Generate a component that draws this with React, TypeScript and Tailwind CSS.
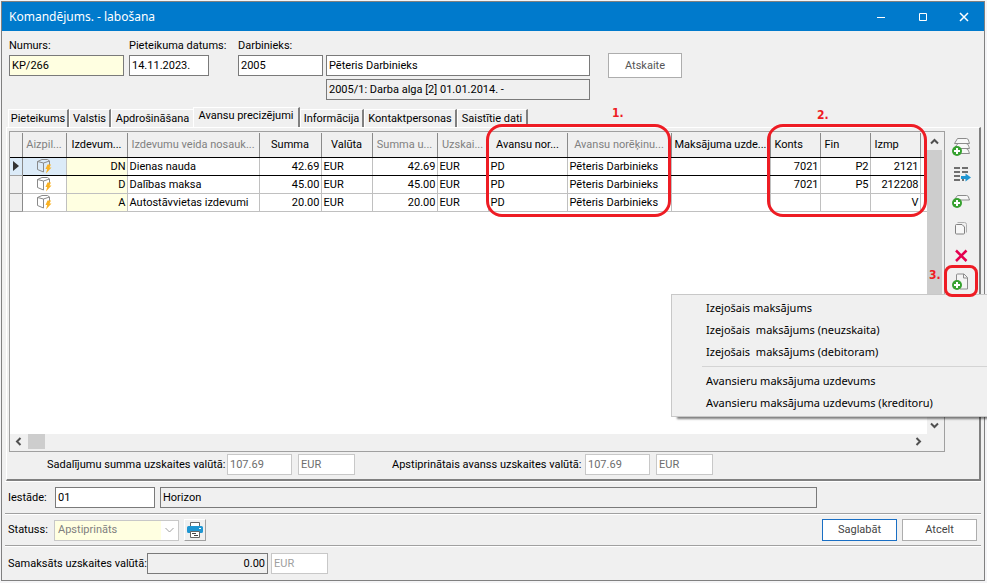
import { Fragment, type ReactNode } from "react";
import clsx from "clsx";

type Column = {
  title: string;
  width: string;
  muted?: boolean;
  left?: boolean;
};

type Row = {
  code: string;
  name: string;
  sum: string;
  konts: string;
  fin: string;
  izmp: string;
};

const columns: Column[] = [
  { title: "", width: "w-3" },
  { title: "Aizpil...", width: "w-[44px]", muted: true },
  { title: "Izdevum...", width: "w-[61px]" },
  { title: "Izdevumu veida nosauk...", width: "w-[132px]", muted: true },
  { title: "Summa", width: "w-[62px]" },
  { title: "Valūta", width: "w-[51px]" },
  { title: "Summa u...", width: "w-[65px]", muted: true },
  { title: "Uzskai...", width: "w-[51px]", muted: true },
  { title: "Avansu nor...", width: "w-[79px]" },
  { title: "Avansu norēķinu...", width: "w-[104px]", muted: true },
  { title: "Maksājuma uzde...", width: "w-[99px]" },
  { title: "Konts", width: "w-[50px]", left: true },
  { title: "Fin", width: "w-[50px]", left: true },
  { title: "Izmp", width: "w-[50px]", left: true },
];

const rows: Row[] = [
  { code: "DN", name: "Dienas nauda", sum: "42.69", konts: "7021", fin: "P2", izmp: "2121" },
  { code: "D", name: "Dalības maksa", sum: "45.00", konts: "7021", fin: "P5", izmp: "212208" },
  { code: "A", name: "Autostāvvietas izdevumi", sum: "20.00", konts: "", fin: "", izmp: "V" },
];

const tabs = [
  { label: "Pieteikums", width: "w-[61px]" },
  { label: "Valstis", width: "w-[42px]" },
  { label: "Apdrošināšana", width: "w-[82px]" },
  { label: "Avansu precizējumi", width: "w-[107px]" },
  { label: "Informācija", width: "w-[64px]" },
  { label: "Kontaktpersonas", width: "w-[93px]" },
  { label: "Saistītie dati", width: "w-[71px]" },
];

const menuGroups = [
  [
    "Izejošais maksājums",
    "Izejošais  maksājums (neuzskaita)",
    "Izejošais  maksājums (debitoram)",
  ],
  ["Avansieru maksājuma uzdevums", "Avansieru maksājuma uzdevums (kreditoru)"],
];

function TextBox({
  id,
  value,
  label,
  className,
}: {
  id: string;
  value: string;
  label?: string;
  className: string;
}) {
  return (
    <input
      id={id}
      aria-label={label}
      defaultValue={value}
      className={clsx("h-[21px] border px-[2px] outline-none", className)}
    />
  );
}

function BoxIcon() {
  return (
    <svg className="mx-auto block" width="16" height="16" viewBox="0 0 16 16" fill="none">
      <path
        d="M1.5 3.5 6 1.5h5.5l2 1.5v4M1.5 3.5v8l6 2.5M1.5 3.5l6 1.5 6-2M7.5 5v9"
        stroke="#8a8a8a"
      />
      <path d="M11.500 6.500h3.500L13.500 9.500h2L10 15.500l1.200-4.500H9.500z" fill="#f9b122" />
    </svg>
  );
}

function PlusBadge({ x, y }: { x: number; y: number }) {
  return (
    <g stroke="none">
      <circle cx={x} cy={y} r="5" fill="#36a12f" />
      <path d={`M${x - 3} ${y}h6M${x} ${y - 3}v6`} stroke="#fff" strokeWidth="2" />
    </g>
  );
}

function AddRowsIcon() {
  return (
    <svg width="20" height="20" viewBox="0 0 20 20" fill="#f7f7f7" stroke="#8c8c8c">
      <path d="M6.500 15.500 9 11.500h6c2 0 2.500 2.500 3.500 5H8z" />
      <path d="M4.500 9.500 7 6.500h8c2 0 2.500 2 3.500 5H8z" />
      <path d="M3.500 6.500 6.500 1.500h9c2 0 2 2.500 3 5z" />
      <PlusBadge x={6} y={14} />
    </svg>
  );
}

function MoveRowsIcon() {
  return (
    <svg width="20" height="20" viewBox="0 0 20 20" fill="none">
      <path
        d="M3 4h6m2 0h6M3 8h6m2 0h6M3 12h6M3 16h6m2 0h2"
        stroke="#444"
        strokeWidth="1.500"
      />
      <path d="M10 12h4.500v-2.500l5.500 4-5.500 4V15H10z" fill="#1f96d2" />
    </svg>
  );
}

function AddRowIcon() {
  return (
    <svg width="20" height="20" viewBox="0 0 20 20" fill="none">
      <path
        d="M3.500 8.500 6.500 4.500h9c2 0 2 2 3 4.500H9"
        stroke="#8c8c8c"
        fill="#f7f7f7"
      />
      <PlusBadge x={6} y={12} />
    </svg>
  );
}

function CopyIcon() {
  return (
    <svg width="20" height="20" viewBox="0 0 20 20" fill="none">
      <path d="M6.500 4.500h7a2 2 0 0 1 2 2v8" stroke="#b0b0b0" />
      <path
        d="M5.500 6.500H11L13.500 9v6a1 1 0 0 1-1 1h-7a1 1 0 0 1-1-1V7.500a1 1 0 0 1 1-1z"
        stroke="#808080"
        fill="#f7f7f7"
      />
    </svg>
  );
}

function DeleteIcon() {
  return (
    <svg width="20" height="20" viewBox="0 0 20 20" fill="none">
      <path d="M5 5.500l10.500 10.500M15.500 5.500 5 16" stroke="#e5004f" strokeWidth="2.500" />
    </svg>
  );
}

function NewDocumentIcon() {
  return (
    <svg width="20" height="20" viewBox="0 0 20 20" fill="none">
      <path d="M5.500 9V3a1 1 0 0 1 1-1H13l3.500 3.500v11.500H9" stroke="#8c8c8c" fill="#f4f4f4" />
      <path d="M12.500 2v4h4" stroke="#8c8c8c" />
      <PlusBadge x={6} y={13} />
    </svg>
  );
}

function PrinterIcon() {
  return (
    <svg width="16" height="16" viewBox="0 0 16 16" fill="none">
      <path d="M3.500 4V.5h9V4" stroke="#666" fill="#fff" />
      <path d="M1.500 4h13A1.500 1.500 0 0 1 16 5.500v4a1.500 1.500 0 0 1-1.500 1.500h-13A1.500 1.500 0 0 1 0 9.500v-4A1.500 1.500 0 0 1 1.500 4z" fill="#1f96d2" />
      <path d="M12 6.500h2" stroke="#fff" />
      <path d="M3.500 9.500h9v6h-9z" stroke="#666" fill="#fff" />
      <path d="M5 11.500h4M7 13.500h4" stroke="#444" />
    </svg>
  );
}

function Chevron({ d }: { d: string }) {
  return (
    <svg width="9" height="9" viewBox="0 0 9 9" fill="none">
      <path d={d} stroke="#505050" strokeWidth="2" />
    </svg>
  );
}

function ToolButton({ label, children }: { label: string; children: ReactNode }) {
  return (
    <button type="button" aria-label={label} className="flex size-5 items-center justify-center">
      {children}
    </button>
  );
}

function TitleBar() {
  return (
    <header className="flex h-[29px] items-center bg-[#007acc] text-white">
      <h1 className="flex-1 pl-[7px] font-['Noto_Sans',sans-serif] text-[12px]">
        Komandējums. - labošana
      </h1>
      <button type="button" aria-label="Minimizēt" className="flex w-[42px] justify-center">
        <svg width="10" height="10" viewBox="0 0 10 10">
          <path d="M1 5.500h8" stroke="#fff" />
        </svg>
      </button>
      <button type="button" aria-label="Maksimizēt" className="flex w-[42px] justify-center">
        <svg width="10" height="10" viewBox="0 0 10 10">
          <path d="M1.500 1.500h7v7h-7z" stroke="#fff" fill="none" />
        </svg>
      </button>
      <button type="button" aria-label="Aizvērt" className="flex w-10 justify-center">
        <svg width="10" height="10" viewBox="0 0 10 10">
          <path d="M1 1l8 8M9 1 1 9" stroke="#fff" strokeWidth="1.500" />
        </svg>
      </button>
    </header>
  );
}

function HeaderForm() {
  return (
    <section className="flex items-start px-[7px] pt-2">
      <div className="mr-[5px] flex w-[115px] flex-col">
        <label htmlFor="numurs" className="h-4 leading-[14px]">
          Numurs:
        </label>
        <TextBox id="numurs" value="KP/266" className="border-[#7a7a7a] bg-[#ffffe1]" />
      </div>
      <div className="mr-[29px] flex w-20 flex-col">
        <label htmlFor="datums" className="h-4 leading-[14px] whitespace-nowrap">
          Pieteikuma datums:
        </label>
        <TextBox id="datums" value="14.11.2023." className="border-[#7a7a7a] bg-white" />
      </div>
      <div className="mr-[3px] flex w-[85px] flex-col">
        <label htmlFor="darbinieks" className="h-4 leading-[14px]">
          Darbinieks:
        </label>
        <TextBox id="darbinieks" value="2005" className="border-[#7a7a7a] bg-white" />
      </div>
      <div className="flex w-[264px] flex-col gap-[3px] pt-4">
        <TextBox
          id="vards"
          label="Darbinieka vārds"
          value="Pēteris Darbinieks"
          className="border-[#7a7a7a] bg-white"
        />
        <TextBox
          id="ligums"
          label="Darba līgums"
          value="2005/1: Darba alga [2] 01.01.2014. -"
          className="border-[#7a7a7a] bg-[#f0f0f0]"
        />
      </div>
      <div className="pt-[14px] pl-[18px]">
        <button
          type="button"
          className="h-[25px] w-[74px] border border-[#adadad] bg-white text-[#555]"
        >
          Atskaite
        </button>
      </div>
    </section>
  );
}

function TabStrip() {
  return (
    <div role="tablist" className="flex h-5 items-end pt-px pl-[6px]">
      {tabs.map((tab) => {
        const active = tab.label === "Avansu precizējumi";
        return (
          <button
            key={tab.label}
            type="button"
            role="tab"
            aria-selected={active}
            className={clsx(
              "border-t border-l border-t-white border-l-white whitespace-nowrap",
              tab.width,
              active ? "h-5 border-r-2 border-r-[#808080] pb-1" : "h-[18px]",
              !active && tab.label !== "Apdrošināšana" && "border-r-2 border-r-[#808080]",
            )}
          >
            {tab.label}
          </button>
        );
      })}
    </div>
  );
}

function ExpenseTable() {
  return (
    <table className="w-full table-fixed border-collapse bg-white">
      <colgroup>
        {columns.map((col, i) => (
          <col key={i} className={col.width} />
        ))}
        <col />
      </colgroup>
      <thead>
        <tr className="h-6 bg-[#f0f0f0]">
          {columns.map((col, i) => (
            <th
              key={i}
              className={clsx(
                "overflow-hidden border-r border-b border-r-[#8a8a8a] border-b-black p-0 pt-px font-normal whitespace-nowrap",
                col.muted ? "text-[#808080]" : "text-black",
                col.left && "pl-1 text-left",
              )}
            >
              {col.title}
            </th>
          ))}
          <th className="border-b border-black p-0" />
        </tr>
      </thead>
      <tbody>
        {rows.map((row, i) => {
          const current = i === 0;
          const cells = [
            row.name,
            row.sum,
            "EUR",
            row.sum,
            "EUR",
            "PD",
            "Pēteris Darbinieks",
            "",
            row.konts,
            row.fin,
            row.izmp,
          ];
          const line = current ? "border-b-black" : "border-b-[#c0c0c0]";
          return (
            <tr key={row.code} className="h-[18px]">
              <td
                className={clsx(
                  "border-r border-b border-r-[#8a8a8a] border-b-[#a0a0a0] p-0",
                  current ? "bg-[#dcebf8]" : "bg-[#f0f0f0]",
                )}
              >
                {current && (
                  <svg className="ml-[3px] block" width="6" height="10" viewBox="0 0 6 10">
                    <path d="M0 0l6 5-6 5z" fill="#333" />
                  </svg>
                )}
              </td>
              <td
                className={clsx(
                  "border-r border-b border-r-[#c0c0c0] p-0",
                  line,
                  current && "bg-[#dcebf8]",
                )}
              >
                <BoxIcon />
              </td>
              <td
                className={clsx(
                  "border-r border-b border-r-[#c0c0c0] bg-[#ffffe1] p-0 pt-px pr-px text-right",
                  line,
                )}
              >
                {row.code}
              </td>
              {cells.map((text, c) => (
                <td
                  key={c}
                  className={clsx(
                    "overflow-hidden border-r border-b border-r-[#c0c0c0] pt-px pr-px pb-0 pl-[2px] whitespace-nowrap",
                    line,
                    (c === 1 || c === 3 || c > 7) && "text-right",
                  )}
                >
                  {text}
                </td>
              ))}
              <td className={clsx("border-b p-0", line)} />
            </tr>
          );
        })}
      </tbody>
    </table>
  );
}

function Grid() {
  return (
    <div className="flex min-w-0 flex-1 flex-col border border-[#a0a0a0] bg-[#f0f0f0]">
      <div className="flex flex-1 pt-px">
        <div className="min-w-0 flex-1 bg-white">
          <ExpenseTable />
        </div>
        <div className="mr-[2px] flex w-[15px] flex-col items-center">
          <div className="flex h-[17px] items-center">
            <Chevron d="M1 6.500 4.500 3 8 6.500" />
          </div>
          <div className="w-full flex-1 bg-[#cdcdcd]" />
          <div className="flex h-[17px] items-center">
            <Chevron d="M1 2.500 4.500 6 8 2.500" />
          </div>
        </div>
      </div>
      <div className="flex h-[17px] items-center pr-[21px] pb-[2px] pl-1">
        <Chevron d="M6.500 1 3 4.500 6.500 8" />
        <div className="ml-[5px] h-[15px] w-[17px] bg-[#cdcdcd]" />
        <div className="flex-1" />
        <Chevron d="M2.500 1 6 4.500 2.500 8" />
      </div>
    </div>
  );
}

function Toolbar() {
  return (
    <div className="flex w-[34px] flex-col items-center gap-[7px] pt-[6px] pr-[2px]">
      <ToolButton label="Pievienot rindas">
        <AddRowsIcon />
      </ToolButton>
      <ToolButton label="Pārvietot rindas">
        <MoveRowsIcon />
      </ToolButton>
      <ToolButton label="Pievienot rindu">
        <AddRowIcon />
      </ToolButton>
      <ToolButton label="Kopēt">
        <CopyIcon />
      </ToolButton>
      <ToolButton label="Dzēst">
        <DeleteIcon />
      </ToolButton>
      <ToolButton label="Veidot dokumentu">
        <NewDocumentIcon />
      </ToolButton>
    </div>
  );
}

function Totals() {
  const box = "border-[#c8c8c8] bg-white text-[#6d6d6d]";
  return (
    <div className="flex h-[27px] items-center pb-[2px] pl-[38px] whitespace-nowrap">
      <label htmlFor="sadalijums" className="w-[180px]">
        Sadalījumu summa uzskaites valūtā:
      </label>
      <TextBox id="sadalijums" value="107.69" className={clsx("w-[65px]", box)} />
      <TextBox id="sad-valuta" label="Valūta" value="EUR" className={clsx("ml-[6px] w-[57px]", box)} />
      <label htmlFor="avanss" className="ml-[37px] w-[193px]">
        Apstiprinātais avanss uzskaites valūtā:
      </label>
      <TextBox id="avanss" value="107.69" className={clsx("w-[65px]", box)} />
      <TextBox id="av-valuta" label="Valūta" value="EUR" className={clsx("ml-[6px] w-[57px]", box)} />
    </div>
  );
}

function Footer() {
  return (
    <footer className="mx-[3px] whitespace-nowrap">
      <div className="flex h-8 items-center border-t border-white pl-[3px]">
        <label htmlFor="iestade" className="w-[47px]">
          Iestāde:
        </label>
        <TextBox id="iestade" value="01" className="w-[100px] border-[#7a7a7a] bg-white" />
        <TextBox
          id="iestade-nos"
          label="Iestādes nosaukums"
          value="Horizon"
          className="mr-[164px] ml-[5px] min-w-0 flex-1 border-[#7a7a7a] bg-[#f0f0f0]"
        />
      </div>
      <div className="border-t border-[#a0a0a0]">
        <div className="flex h-[31px] items-center border-t border-white pr-1 pl-[3px]">
          <label htmlFor="statuss" className="w-[46px]">
            Statuss:
          </label>
          <div className="relative">
            <select
              id="statuss"
              className="block h-[21px] w-[125px] appearance-none border border-[#c8c8c8] bg-[#ffffe1] px-[3px] text-[#808080] outline-none"
            >
              <option>Apstiprināts</option>
            </select>
            <span className="pointer-events-none absolute inset-y-px right-px flex w-[17px] items-center justify-center bg-white">
              <svg width="9" height="6" viewBox="0 0 9 6" fill="none">
                <path d="M.5 1l4 4 4-4" stroke="#a0a0a0" />
              </svg>
            </span>
          </div>
          <button
            type="button"
            aria-label="Drukāt"
            className="ml-[5px] flex size-[22px] items-center justify-center border border-t-white border-r-[#a0a0a0] border-b-[#a0a0a0] border-l-white"
          >
            <PrinterIcon />
          </button>
          <div className="flex flex-1 justify-end gap-[5px] text-[#444]">
            <button type="button" className="h-[22px] w-[75px] border border-[#1a6fc4] bg-white">
              Saglabāt
            </button>
            <button type="button" className="h-[22px] w-[75px] border border-[#adadad] bg-white">
              Atcelt
            </button>
          </div>
        </div>
      </div>
      <div className="border-t border-[#a0a0a0]">
        <div className="flex h-[34px] items-center border-t border-white pl-[3px]">
          <label htmlFor="samaksats" className="w-[139px]">
            Samaksāts uzskaites valūtā:
          </label>
          <TextBox
            id="samaksats"
            value="0.00"
            className="w-[121px] border-[#7a7a7a] bg-[#f0f0f0] text-right"
          />
          <TextBox
            id="sam-valuta"
            label="Valūta"
            value="EUR"
            className="ml-[3px] w-[57px] border-[#c8c8c8] bg-white text-[#a0a0a0]"
          />
        </div>
      </div>
    </footer>
  );
}

function ContextMenu() {
  return (
    <div
      role="menu"
      className="absolute top-[294px] right-0 w-[316px] border border-r-0 border-[#c8c8c8] bg-[#f0f0f0] py-[2px] font-['Noto_Sans',sans-serif] text-[11px] shadow-[5px_3px_2px_-1px_rgba(0,0,0,0.5)]"
    >
      {menuGroups.map((group, i) => (
        <Fragment key={i}>
          {i > 0 && <hr className="my-[3px] ml-[30px] border-[#d4d4d4]" />}
          {group.map((item) => (
            <button
              key={item}
              type="button"
              role="menuitem"
              className="block h-[22px] w-full pl-[34px] text-left whitespace-pre"
            >
              {item}
            </button>
          ))}
        </Fragment>
      ))}
    </div>
  );
}

// Numbered red frames over the parts that the user guide describes
function Callouts() {
  const frame = "pointer-events-none absolute border-3 border-[#ee1c24]";
  const number =
    "absolute font-['DejaVu_Sans_Condensed','DejaVu_Sans',sans-serif] text-[12px] font-bold text-[#ee1c24]";
  return (
    <>
      <div className={clsx(frame, "top-[124px] left-[486px] h-[93px] w-[185px] rounded-2xl")} />
      <div className={clsx(frame, "top-[124px] left-[767px] h-[93px] w-[160px] rounded-2xl")} />
      <div className={clsx(frame, "top-[265px] left-[944px] h-8 w-[34px] rounded-lg")} />
      <span className={clsx(number, "top-[105px] left-[612px]")}>1.</span>
      <span className={clsx(number, "top-[107px] left-[817px]")}>2.</span>
      <span className={clsx(number, "top-[267px] left-[929px]")}>3.</span>
    </>
  );
}

export default function App() {
  return (
    <div className="relative flex min-h-screen flex-col overflow-hidden bg-[#f4f4f6] pt-px pr-[2px] pb-[2px] pl-px font-['Roboto',sans-serif] text-[11px] leading-4 text-black">
      <div className="flex flex-1 flex-col border border-[#808080] bg-[#f0f0f0]">
        <TitleBar />
        <HeaderForm />
        <div className="pt-[7px]">
          <TabStrip />
        </div>
        <main className="mr-[3px] ml-1 flex flex-1 flex-col border-t border-r-2 border-b-2 border-l border-t-white border-r-[#808080] border-b-[#808080] border-l-white pt-[3px] pl-[2px]">
          <div className="flex flex-1">
            <Grid />
            <Toolbar />
          </div>
          <Totals />
        </main>
        <Footer />
      </div>
      <ContextMenu />
      <Callouts />
    </div>
  );
}
